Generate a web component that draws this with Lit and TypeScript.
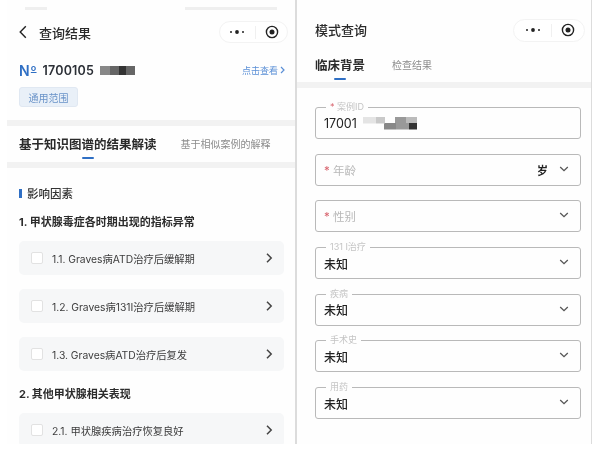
import { LitElement, html, css, svg } from "lit";
import { customElement } from "lit/decorators.js";

const chevR = html`<svg class="chev-r" width="8" height="12" viewBox="0 0 8 12"><path d="M2 1.8 6.2 6 2 10.2" fill="none" stroke="#444" stroke-width="1.5"/></svg>`;
const chevD = html`<svg class="chev-d" width="10" height="6" viewBox="0 0 10 6"><path d="M1.2 1 5 4.6 8.8 1" fill="none" stroke="#555" stroke-width="1.3"/></svg>`;

const capsule = html`<div class="capsule">
  <svg width="16" height="6" viewBox="0 0 16 6"><g fill="#222"><circle cx="2" cy="3" r="1"/><circle cx="8" cy="3" r="1.9"/><circle cx="14" cy="3" r="1"/></g></svg>
  <i class="sep"></i>
  <svg width="14" height="14" viewBox="0 0 14 14">${svg`<circle cx="7" cy="7" r="5.6" fill="none" stroke="#222" stroke-width="1.4"/><circle cx="7" cy="7" r="2.5" fill="#222"/>`}</svg>
</div>`;

const items1 = ["1.1. Graves病ATD治疗后缓解期", "1.2. Graves病131I治疗后缓解期", "1.3. Graves病ATD治疗后复发"];

interface Field { label?: string; req?: boolean; value?: string; placeholder?: string; unit?: string; chevron: boolean; redact?: boolean }
const fields: Field[] = [
  { label: "案例ID", req: true, value: "17001", chevron: false, redact: true },
  { placeholder: "年龄", req: true, unit: "岁", chevron: true },
  { placeholder: "性别", req: true, chevron: true },
  { label: "131 I治疗", value: "未知", chevron: true },
  { label: "疾病", value: "未知", chevron: true },
  { label: "手术史", value: "未知", chevron: true },
  { label: "用药", value: "未知", chevron: true },
];

@customElement("app-root")
export class AppRoot extends LitElement {
  static styles = css`
    :host { display: block; width: 600px; height: 464px; background: #fff; overflow: hidden;
      font-family: Inter, "Noto Sans CJK SC", sans-serif; color: #222; filter: blur(0.45px); }
    * { box-sizing: border-box; }
    .page { display: flex; height: 444px; }
    .left { width: 289px; margin-left: 7px; height: 444px; overflow: hidden; border-right: 1px solid #dcdcdc; background: #fefefe; }
    .right { width: 296px; height: 444px; overflow: hidden; border-left: 1px solid #dcdcdc; border-right: 1px solid #dcdcdc; background: #fefefe; }

    .status { height: 20px; display: flex; justify-content: space-between; padding: 7px 18px 0 18px; }
    .status i { display: block; height: 3px; background: #efefef; }
    .status .a { width: 22px; }
    .status .b { width: 92px; }
    .nav { display: flex; align-items: center; justify-content: space-between; height: 24px; padding: 0 7px 0 12px; margin-bottom: 2px; }
    .nav.r { padding: 0 6px 0 18px; margin: -2px 0 0 0; }
    .nav.r .title { padding-bottom: 2px; }
    .title { font-size: 13px; font-weight: 500; display: flex; align-items: center; gap: 12px; color: #2a2a2a; }
    .capsule { width: 69px; height: 22px; border: 1px solid #f3f3f3; border-radius: 11px; display: flex; align-items: center; justify-content: space-between; padding: 0 8px 0 9px; background: #fff; }
    .nav.r .capsule { width: 72px; height: 23px; border-radius: 12px; padding: 0 9px 0 11px; }
    .sep { width: 1px; height: 13px; background: #f0f0f0; }

    .no-row { display: flex; align-items: center; justify-content: space-between; height: 20px; margin-top: 16px; padding: 0 10px 0 12px; }
    .no { display: flex; align-items: center; gap: 6px; font-size: 12.5px; font-weight: 600; color: #2b2f36; letter-spacing: 0.2px; }
    .no b { display: inline-flex; align-items: flex-start; color: #2f6fc4; font-size: 14px; font-weight: 600; }
    .no b u { font-size: 9px; line-height: 11px; margin-left: 1px; }
    .redact-a { width: 35px; height: 9px; background: linear-gradient(90deg, #888 0 30%, #666 30% 55%, #333 55% 75%, #666 75% 100%); }
    .link { font-size: 9px; color: #5a8fd6; display: flex; align-items: center; gap: 2px; }
    .tag { display: flex; align-items: center; justify-content: center; width: 59px; height: 20px; margin: 7px 0 0 12px; font-size: 10px; color: #6a93c8; background: #e9f0f8; border: 1px solid #e0e8f2; border-radius: 3px; }
    .band { height: 6px; background: #f2f2f2; }
    .band.first { margin-top: 13px; }
    .tabs { height: 36px; display: flex; align-items: center; padding: 0 0 2px 12px; gap: 24px; }
    .tabs.r { padding: 0 0 0 18px; gap: 27px; margin-top: 4px; }
    .tab { position: relative; font-size: 10px; color: #8c8c8c; }
    .tab.on { font-size: 12.5px; font-weight: 700; color: #2a2a2a; }
    .tab.on::after { content: ""; position: absolute; left: 50%; bottom: -6px; width: 12px; height: 2px; margin-left: -6px; background: #2f6fc4; border-radius: 1px; }

    .body { padding: 15px 11px 0 12px; }
    .heading { display: flex; align-items: center; gap: 5px; height: 20px; font-size: 11.5px; font-weight: 500; color: #333; }
    .heading i { width: 3px; height: 9px; background: #2f6fc4; }
    .sub { height: 20px; line-height: 20px; font-size: 11px; font-weight: 700; color: #2c2c2c; margin-top: 9px; }
    .sub.two { margin-top: 13px; }
    .list { display: flex; flex-direction: column; gap: 14px; margin-top: 9px; }
    .item { height: 34px; display: flex; align-items: center; padding: 0 11px 0 12px; background: #f6f7f8; border-radius: 5px; font-size: 10.3px; color: #3c3c3c; flex: none; }
    .box { width: 12px; height: 12px; border: 1px solid #e2e2e2; background: #fff; border-radius: 2px; margin-right: 9px; flex: none; }
    .item span { flex: 1; }

    .fields { display: flex; flex-direction: column; gap: 14.7px; padding: 19px 0 0 18px; width: 284px; }
    .field { position: relative; height: 32px; border: 1.3px solid #b9b9b9; border-radius: 3px; display: flex; align-items: center; padding: 0 9px 0 8px; font-size: 12px; font-weight: 500; color: #222; }
    .legend { position: absolute; left: 10px; top: -7px; padding: 0 4px; height: 11px; line-height: 11px; background: #fefefe; font-size: 9px; font-weight: 400; color: #c4c4c4; }
    .req { color: #d8656f; }
    .ph { color: #b9b9b9; font-weight: 400; font-size: 11.5px; }
    .val { flex: 1; display: flex; align-items: center; gap: 6px; }
    .id { font-size: 12.5px; font-weight: 400; }
    .unit { font-size: 11px; font-weight: 600; margin-right: 11px; }
    .chev-d { margin: 0 2px 2px 0; }
    .redact-b { width: 54px; height: 13px; background:
      linear-gradient(90deg, #e4e4e4 0 25%, #c9c9c9 25% 40%, transparent 40%) top left/100% 50% no-repeat,
      linear-gradient(90deg, transparent 0 38%, #888 38% 62%, #999 62% 85%, #333 85% 100%) bottom left/100% 50% no-repeat,
      linear-gradient(90deg, transparent 0 60%, #999 60% 80%, #bbb 80% 100%) top left/100% 50% no-repeat; }
  `;

  private field(f: Field) {
    return html`<div class="field">
      ${f.label ? html`<div class="legend">${f.req ? html`<span class="req">* </span>` : ""}${f.label}</div>` : ""}
      <div class="val">
        ${f.placeholder ? html`<span class="ph"><span class="req">* </span>${f.placeholder}</span>` : ""}
        ${f.value ? html`<span class=${f.redact ? "id" : ""}>${f.value}</span>` : ""}
        ${f.redact ? html`<i class="redact-b"></i>` : ""}
      </div>
      ${f.unit ? html`<span class="unit">${f.unit}</span>` : ""}
      ${f.chevron ? chevD : ""}
    </div>`;
  }

  render() {
    return html`<div class="page">
      <section class="left">
        <div class="status"><i class="a"></i><i class="b"></i></div>
        <div class="nav">
          <div class="title">
            <svg width="8" height="14" viewBox="0 0 8 14"><path d="M6.8 1.2 1.2 7l5.6 5.8" fill="none" stroke="#222" stroke-width="1.4"/></svg>
            查询结果
          </div>
          ${capsule}
        </div>
        <div class="no-row">
          <div class="no"><b>N<u>o</u></b><span>1700105</span><i class="redact-a"></i></div>
          <div class="link">点击查看 <svg width="5" height="8" viewBox="0 0 5 8"><path d="M1 1l3 3-3 3" fill="none" stroke="#5a8fd6" stroke-width="1.2"/></svg></div>
        </div>
        <div class="tag">通用范围</div>
        <div class="band first"></div>
        <div class="tabs"><div class="tab on">基于知识图谱的结果解读</div><div class="tab">基于相似案例的解释</div></div>
        <div class="band"></div>
        <div class="body">
          <div class="heading"><i></i>影响因素</div>
          <div class="sub">1. 甲状腺毒症各时期出现的指标异常</div>
          <div class="list">
            ${items1.map((t) => html`<div class="item"><i class="box"></i><span>${t}</span>${chevR}</div>`)}
          </div>
          <div class="sub two">2. 其他甲状腺相关表现</div>
          <div class="list">
            <div class="item"><i class="box"></i><span>2.1. 甲状腺疾病治疗恢复良好</span>${chevR}</div>
          </div>
        </div>
      </section>
      <section class="right">
        <div class="status"></div>
        <div class="nav r"><div class="title">模式查询</div>${capsule}</div>
        <div class="tabs r"><div class="tab on">临床背景</div><div class="tab">检查结果</div></div>
        <div class="band"></div>
        <div class="fields">${fields.map((f) => this.field(f))}</div>
      </section>
    </div>`;
  }
}
